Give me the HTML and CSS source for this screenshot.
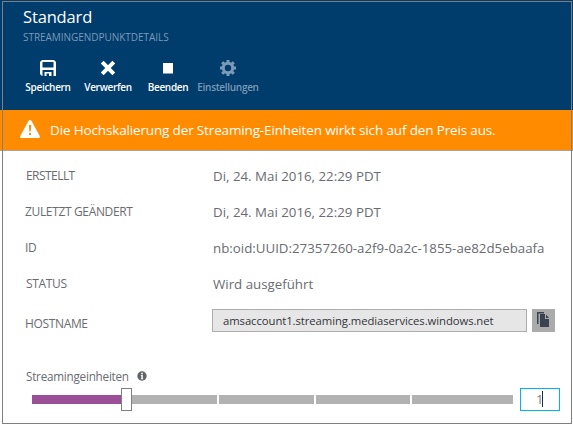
FILE: index.html
```html
<!DOCTYPE html>
<html lang="de">
<head>
<meta charset="utf-8">
<title>Standard</title>
<link rel="stylesheet" href="styles.css">
</head>
<body>
<main class="blade">
  <header class="head">
    <h1 class="title">Standard</h1>
    <p class="subtitle">STREAMINGENDPUNKTDETAILS</p>
    <nav class="toolbar">
      <div class="command save">
        <svg width="16" height="16" viewBox="0 0 16 16"><path fill="#fff" fill-rule="evenodd" d="M2 0H14L16 2V16H13.500V10H2.500V16H2L0 14V2ZM2.500 2V7.500H13.500V2ZM4.500 12H11.500V16H9V13.500H6.500V16H4.500Z"/></svg>
        <span>Speichern</span>
      </div>
      <div class="command discard">
        <svg width="16" height="16" viewBox="0 0 16 16"><path stroke="#fff" stroke-width="4" d="M2.200 2.200L13.800 13.800M13.800 2.200L2.200 13.800"/></svg>
        <span>Verwerfen</span>
      </div>
      <div class="command stop">
        <svg width="16" height="16" viewBox="0 0 16 16"><path fill="#fff" d="M3 3H13V13.500H3Z"/></svg>
        <span>Beenden</span>
      </div>
      <div class="command settings">
        <svg width="16" height="16" viewBox="0 0 16 16"><g stroke="#7b9ab8" fill="none"><circle cx="8" cy="8" r="4.700" stroke-width="3"/><path stroke-width="3" d="M8 0V3M8 13V16M0 8H3M13 8H16M2.200 2.200L4.400 4.400M11.600 11.600L13.800 13.800M13.800 2.200L11.600 4.400M4.400 11.600L2.200 13.800"/></g></svg>
        <span>Einstellungen</span>
      </div>
    </nav>
  </header>
  <section class="notice">
    <svg width="20" height="18" viewBox="0 0 20 18"><path fill="#fff" d="M10 0Q11 0 11.700 1.200L19.700 16Q20.500 18 18.500 18H1.500Q-.5 18 .3 16L8.300 1.200Q9 0 10 0Z"/><path fill="#ff8c00" d="M8.900 5H11.100L10.700 11.500H9.300ZM9 13H11V15H9Z"/></svg>
    <span class="notice-text">Die Hochskalierung der Streaming-Einheiten wirkt sich auf den Preis aus.</span>
  </section>
  <section class="details">
    <div class="row"><span class="label l-created">ERSTELLT</span><span class="value">Di, 24. Mai 2016, 22:29 PDT</span></div>
    <div class="row"><span class="label l-changed">ZULETZT GEÄNDERT</span><span class="value">Di, 24. Mai 2016, 22:29 PDT</span></div>
    <div class="row"><span class="label">ID</span><span class="value">nb:oid:UUID:27357260-a2f9-0a2c-1855-ae82d5ebaafa</span></div>
    <div class="row"><span class="label l-status">STATUS</span><span class="value">Wird ausgeführt</span></div>
    <div class="row host">
      <span class="label l-host">HOSTNAME</span>
      <div class="host-box">amsaccount1.streaming.mediaservices.windows.net</div>
      <div class="copy"><svg width="23" height="23" viewBox="0 0 23 23"><path fill="#3b4350" d="M5 3H12V4.500H6.500V15H5ZM8 5H13V10H17V18H8ZM14 5.500L17 9H14Z"/></svg></div>
    </div>
  </section>
  <section class="units">
    <div class="units-head"><span class="units-text">Streamingeinheiten</span><svg width="10" height="10" viewBox="0 0 10 10"><circle cx="5" cy="5" r="4.700" fill="#626468"/><path fill="#fff" d="M4.200 1.700H5.800V3.200H4.200ZM3.800 4H5.800V7.500H6.300V8.200H3.800V7.500H4.300V4.700H3.800Z"/></svg></div>
    <div class="units-row">
      <div class="slider"><i class="used"></i><i class="thumb"></i><i class="first"></i><i></i><i class="fourth"></i><i class="last"></i></div>
      <div class="count">1<i class="caret"></i></div>
    </div>
  </section>
</main>
</body>
</html>
```
FILE: styles.css
```css
* { box-sizing: border-box; }
body {
  margin: 0;
  width: 573px;
  height: 425px;
  overflow: hidden;
  background: #fff;
  font-family: "Open Sans", "Noto Sans", sans-serif;
  color: #6a6c71;
}
.blade { position: relative; height: 425px; }
.blade::after {
  content: "";
  position: absolute;
  inset: 1px 1px 1px 2px;
  border: 1px solid #7f7f7f;
}
svg { display: block; flex: none; }
span, .title, .subtitle { white-space: nowrap; }
.head { height: 110px; padding: 7px 0 0 23px; background: #003c6c; }
.title { margin: 0; font-size: 16.5px; font-weight: 400; line-height: 20px; letter-spacing: -.15px; color: #fff; }
.subtitle { margin: 3px 0 0; font-size: 10px; line-height: 14px; color: #7b9ab8; letter-spacing: -.04px; }
.toolbar { display: flex; margin-top: 16px; padding-left: 3px; color: #fff; }
.command { display: flex; flex-direction: column; align-items: center; font-size: 10px; line-height: 14px; font-weight: 600; letter-spacing: -.3px; }
.command span { margin-top: 4px; }
.save { width: 44px; }
.discard { width: 46px; margin-left: 15px; }
.stop { width: 40px; margin-left: 17px; }
.settings { width: 60px; margin-left: 10px; color: #7b9ab8; }
.notice {
  display: flex;
  align-items: center;
  height: 41px;
  padding-left: 20px;
  background: #ff8c00;
  border-bottom: 1px solid #a9a39b;
  color: #fff;
}
.notice svg { margin-top: -2px; }
.notice-text { margin-left: 10px; font-size: 13.5px; line-height: 20px; letter-spacing: -.15px; }
.details { padding: 7px 0 0 25px; }
.row { display: grid; grid-template-columns: 188px 1fr; align-items: center; height: 36px; }
.label { font-size: 12px; line-height: 18px; letter-spacing: -.35px; }
.l-created, .l-status { padding-left: 1px; }
.l-created { letter-spacing: -.55px; }
.value { font-size: 13.3px; line-height: 20px; }
.host { grid-template-columns: 187px 315px 28px; height: 37px; }
.l-host { padding-top: 6px; }
.host-box { height: 23px; padding-left: 10px; border: 1px solid #adadad; background: #e6e6e6; color: #33343a; font-size: 11.3px; line-height: 22px; letter-spacing: -.07px; }
.copy { width: 23px; height: 23px; margin-left: 5px; background: #ababab; }
.units { padding: 28px 0 0 26px; }
.units-head { display: flex; align-items: center; height: 18px; font-size: 11.7px; line-height: 16px; letter-spacing: -.23px; }
.units-text { width: 111px; margin-top: -1px; }
.units-row { display: flex; align-items: center; margin-top: 2px; height: 24px; padding-left: 6px; }
.slider { display: flex; align-items: center; width: 481px; }
.slider i { height: 9px; margin-right: 2px; background: #b2b2b2; flex: 0 0 95px; }
.slider .used { flex-basis: 89px; margin: 0; background: #9b4f96; }
.slider .thumb { flex-basis: 11px; height: 23px; margin: 0; background: #fff; border: 1px solid #7f7f7f; }
.slider .first { flex-basis: 85px; }
.slider .fourth { flex-basis: 94px; }
.slider .last { flex-basis: 101px; margin: 0; }
.count { display: flex; align-items: center; width: 40px; height: 23px; margin-left: 7px; padding-left: 15px; border: 1px solid #00b5ee; font-size: 13px; color: #7a7c80; }
.caret { width: 1px; height: 16px; margin-left: -1px; background: #222a35; }
```
